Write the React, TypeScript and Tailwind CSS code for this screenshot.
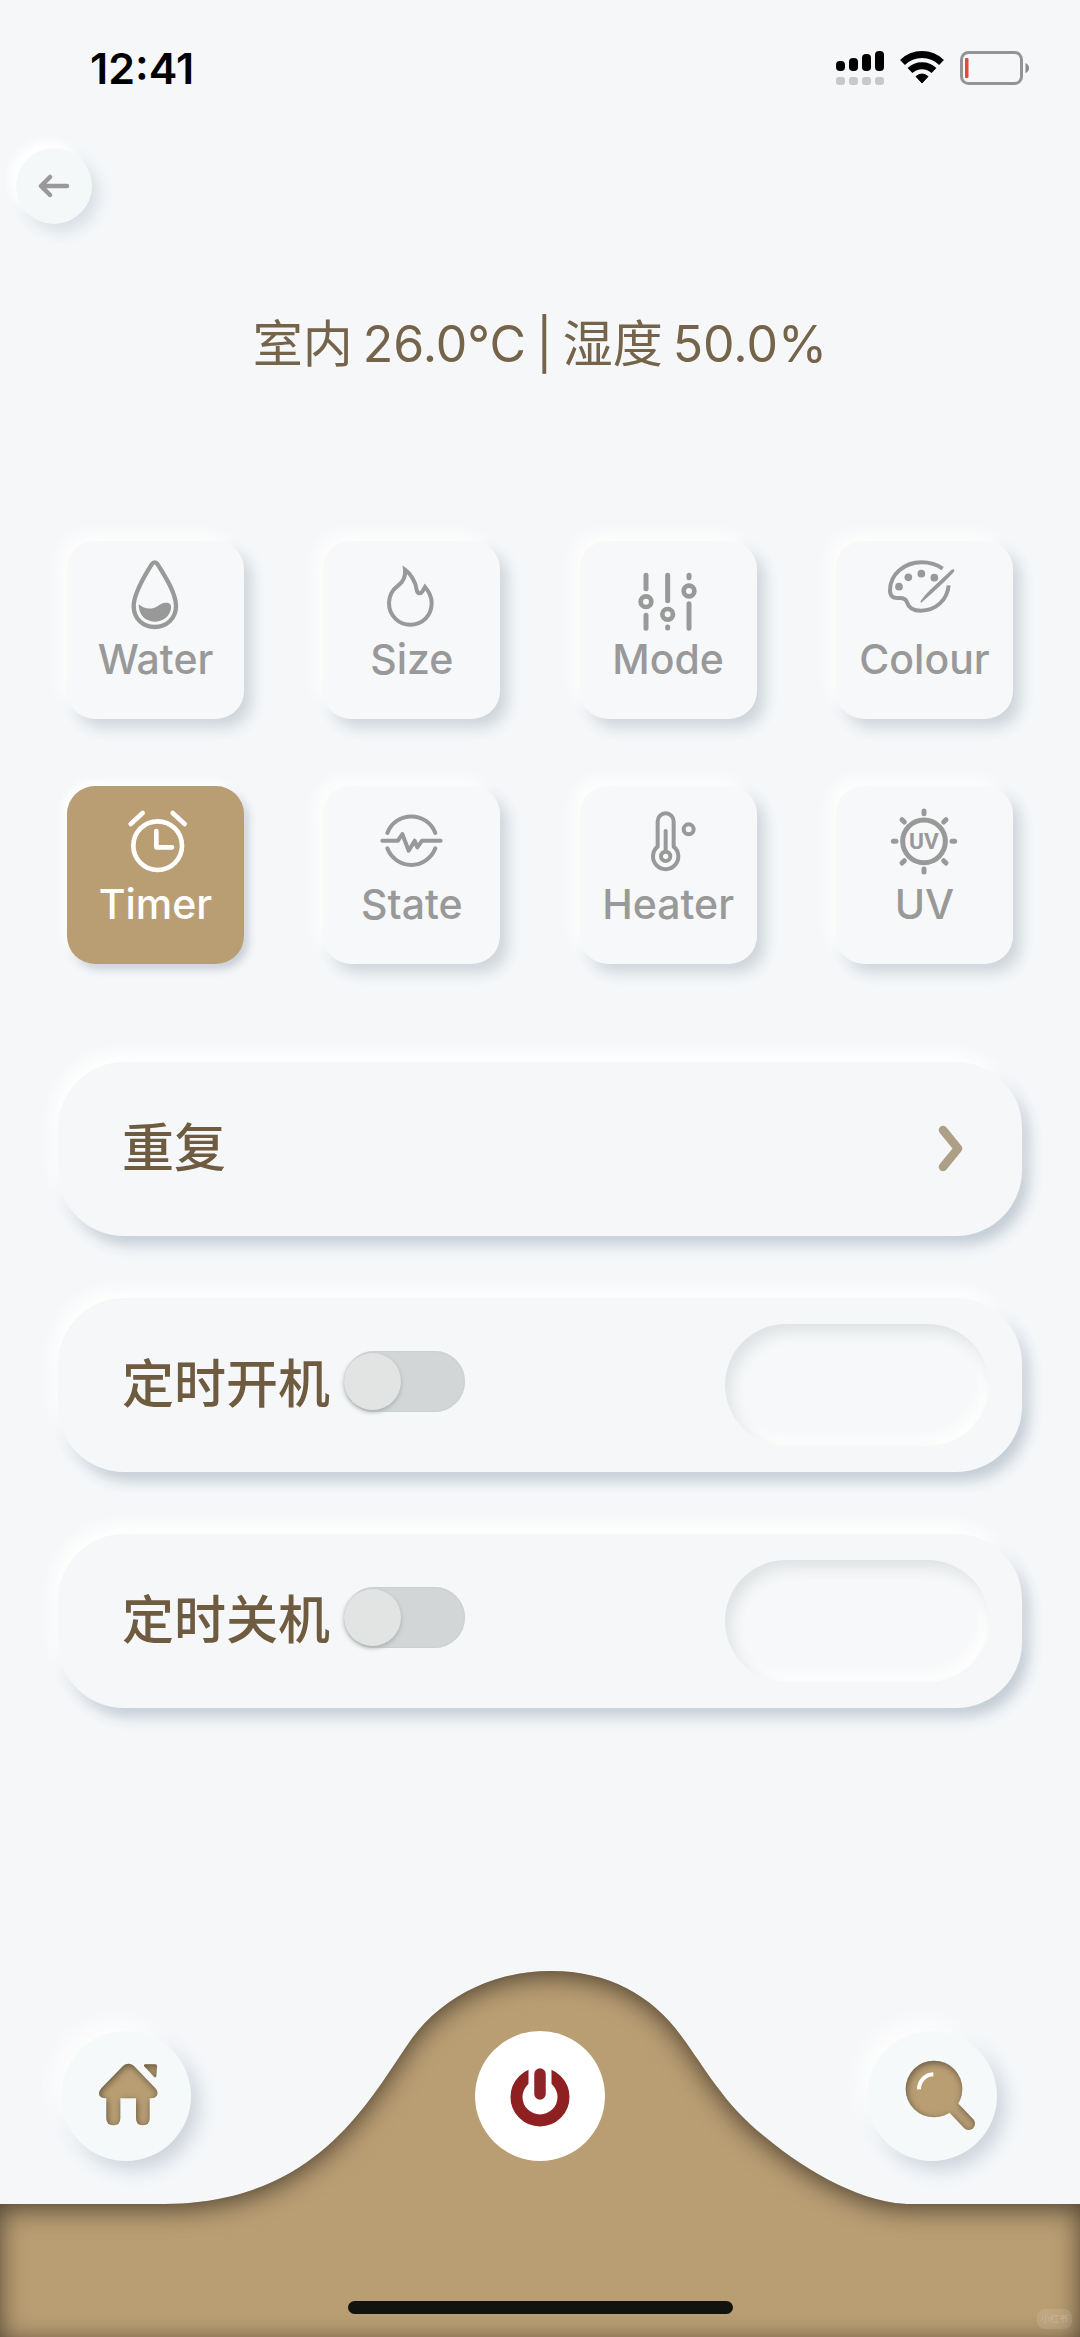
import { useState } from "react";
import type { ReactNode } from "react";

type Tile = {
	name: string;
	viewBox: string;
	icon: ReactNode;
};

const tiles: Tile[] = [
	{
		name: "Water",
		viewBox: "226 134 240 240",
		icon: (
			<>
				<path
					strokeWidth="13"
					d="M333 162C338 154 346 154 351 162C375 200 406 250 406 287C406 325 377 350 342 350C307 350 279 325 279 287C279 250 309 200 333 162Z"
				/>
				<path
					stroke="none"
					fill="currentColor"
					d="M294 282C310 296 330 298 346 290C358 284 362 277 376 277C388 276 393 284 391 296C386 320 366 334 342 334C314 334 294 314 294 282Z"
				/>
			</>
		),
	},
	{
		name: "Size",
		viewBox: "996 134 240 240",
		icon: (
			<path
				strokeWidth="12"
				strokeLinejoin="miter"
				d="M1095 178C1112 190 1127 215 1130 238C1132 252 1144 252 1149 240L1155 230C1168 245 1175 262 1175 278C1175 316 1147 343 1111 343C1076 343 1047 316 1047 278C1047 254 1058 238 1074 226C1090 214 1097 196 1095 178Z"
			/>
		),
	},
	{
		name: "Mode",
		viewBox: "266 134 240 240",
		icon: (
			<>
				<path
					strokeWidth="15"
					d="M320 195V235M320 315V354M385 195V271M385 350V353M449 195V202M449 280V354"
				/>
				<g strokeWidth="14">
					<circle cx="320" cy="274" r="16" />
					<circle cx="385" cy="312" r="16" />
					<circle cx="449" cy="242" r="16" />
				</g>
			</>
		),
	},
	{
		name: "Colour",
		viewBox: "1034 134 240 240",
		icon: (
			<>
				<path
					strokeWidth="12"
					strokeLinecap="butt"
					d="M1210 175C1190 161 1168 156 1147 156C1095 156 1052 192 1052 240C1052 256 1060 264 1076 263C1090 262 1100 264 1103 276C1108 292 1122 301 1144 301C1190 301 1224 268 1228 225"
				/>
				<g stroke="none" fill="currentColor">
					<circle cx="1079" cy="229" r="11.5" />
					<circle cx="1107" cy="201" r="11.5" />
					<circle cx="1146" cy="190" r="11.5" />
					<circle cx="1185" cy="202" r="11.5" />
					<path d="M1236 179Q1242 174 1245 179Q1246 182 1243 186Q1210 222 1146 277Q1142 277 1144 272Q1156 254 1172 239Z" />
				</g>
			</>
		),
	},
	{
		name: "Timer",
		viewBox: "226 118 240 240",
		icon: (
			<g strokeWidth="14">
				<circle cx="351" cy="255" r="73" />
				<path d="M347 211V260H394M270 190L306 157M396 157L432 190" />
			</g>
		),
	},
	{
		name: "State",
		viewBox: "996 118 240 240",
		icon: (
			<g strokeWidth="12">
				<path d="M1042 217A77 77 0 0 1 1186 217M1042 263A77 77 0 0 0 1186 263" />
				<path d="M1027 240H1074L1087 220L1106 270L1124 240L1132 260L1146 240H1202" />
			</g>
		),
	},
	{
		name: "Heater",
		viewBox: "266 118 240 240",
		icon: (
			<g strokeWidth="12">
				<path d="M355 258V182A24 24 0 0 1 403 182V258A38 38 0 1 1 355 258Z" />
				<circle cx="379" cy="287" r="14" />
				<path d="M379 211V272" />
				<circle cx="448" cy="206" r="15" />
			</g>
		),
	},
	{
		name: "UV",
		viewBox: "1034 118 240 240",
		icon: (
			<g strokeWidth="15">
				<circle cx="1154" cy="242" r="64" />
				<path d="M1154 151V159M1154 325V334M1062 242H1070M1238 242H1246M1088 177L1095 184M1220 177L1213 184M1095 300L1088 307M1213 300L1220 307" />
				<text
					x="1154"
					y="266"
					textAnchor="middle"
					stroke="none"
					fill="currentColor"
					fontFamily="Roboto, sans-serif"
					fontSize="68"
					fontWeight="700"
				>
					UV
				</text>
			</g>
		),
	},
];

function StatusBar() {
	return (
		<div className="flex items-center justify-between py-11 pl-[90px] pr-[50px] text-black">
			<span className="text-[43px] leading-12 font-semibold">12:41</span>
			<div className="flex items-center gap-4">
				<svg className="h-9 w-12" viewBox="0 0 48 36" aria-hidden="true">
					<rect x="0" y="11" width="9" height="10" rx="4" />
					<rect x="13" y="8" width="9" height="13" rx="4" />
					<rect x="26" y="4" width="9" height="17" rx="4" />
					<rect x="39" y="1" width="9" height="20" rx="4" />
					<g fill="#c8c8c8">
						<rect x="0" y="27" width="9" height="8" rx="3" />
						<rect x="13" y="27" width="9" height="8" rx="3" />
						<rect x="26" y="27" width="9" height="8" rx="3" />
						<rect x="39" y="27" width="9" height="8" rx="3" />
					</g>
				</svg>
				<svg className="h-9 w-11" viewBox="0 0 44 36" fill="none" aria-hidden="true">
					<path d="M2.5 12.5A28 28 0 0 1 41.5 12.5" stroke="#000" strokeWidth="7" />
					<path d="M10 20.5A17.5 17.5 0 0 1 34 20.5" stroke="#000" strokeWidth="7" />
					<path d="M16 26.5Q22 21.500 28 26.500L22 33Z" fill="#000" stroke="#000" strokeLinejoin="round" />
				</svg>
				<svg className="h-9 w-[70px]" viewBox="0 0 70 36" fill="none" aria-hidden="true">
					<rect x="1.500" y="2.500" width="60" height="31" rx="7" stroke="#949494" strokeWidth="3" />
					<rect x="5" y="8" width="3.500" height="20" rx="1" fill="#e5483f" />
					<path d="M65.500 13V23Q69 21.500 69 18T65.500 13Z" fill="#8a8a8a" />
				</svg>
			</div>
		</div>
	);
}

type TimerRowProps = {
	id: string;
	label: string;
};

function TimerRow({ id, label }: TimerRowProps) {
	const [on, setOn] = useState(false);

	return (
		<div className="flex items-center justify-between rounded-[66px] bg-[#f5f7f9] py-[26px] pl-16 pr-[33px] shadow-[-6px_-10px_14px_#fefefd,7px_9px_14px_#c3ccd5]">
			<div className="flex items-center gap-3.5">
				<label htmlFor={id} className="text-[52px] leading-16 font-medium text-[#6e5b40]">
					{label}
				</label>
				<input
					id={id}
					type="checkbox"
					role="switch"
					checked={on}
					onChange={(e) => setOn(e.target.checked)}
					className="mb-2 flex h-[61px] w-[121px] appearance-none items-center rounded-full bg-[#d2d6d7] shadow-[inset_0_0_2px_#bfc3c4] transition-colors before:size-[57px] before:rounded-full before:bg-[#e2e3e3] before:shadow-[0_2px_4px_#a9adae] before:transition-transform checked:bg-[#b99e73] checked:before:translate-x-16"
				/>
			</div>
			<input
				type="text"
				aria-label={`${label} 时间`}
				className="h-[122px] w-[264px] rounded-full bg-[#f6f8f9] px-10 text-center text-4xl text-[#6e5b40] shadow-[inset_6px_8px_14px_#dfe2e4,inset_-6px_-8px_12px_#fefefd]"
			/>
		</div>
	);
}

export default function App() {
	const [active, setActive] = useState("Timer");

	return (
		<div className="flex min-h-screen flex-col bg-[#f5f7f9] font-['Inter','Noto_Sans_CJK_SC',sans-serif]">
			<StatusBar />

			<button
				aria-label="Back"
				className="mt-3 ml-4 flex size-19 items-center justify-center rounded-full bg-[#f5f8f9] text-[#999] shadow-[-7px_-7px_10px_#fff,7px_8px_14px_#d9e0e5]"
			>
				<svg className="h-6 w-8" viewBox="0 0 32 24" fill="none" stroke="currentColor" strokeWidth="4.500" strokeLinecap="round" strokeLinejoin="round">
					<path d="M29 12H3M12 3L3 12L12 21" />
				</svg>
			</button>

			<h1 className="mt-22 flex justify-center gap-2.5 text-[50px] leading-16 text-[#75634a]">
				<span>室内</span>
				<span>26.0°C</span>
				<span>|</span>
				<span>湿度</span>
				<span>50.0%</span>
			</h1>

			<div className="mt-[165px] grid grid-cols-[repeat(4,177px)] justify-between gap-y-[67px] px-[67px]">
				{tiles.map((tile) => {
					const isActive = tile.name === active;
					return (
						<button
							key={tile.name}
							onClick={() => setActive(tile.name)}
							className={`flex flex-col items-center gap-1 rounded-[28px] pt-3.5 pb-10 ${
								isActive
									? "bg-[#b99e73] text-white shadow-[-4px_-4px_8px_#fff,4px_5px_8px_#c4ccd4]"
									: "bg-[#f6f8f9] text-[#999] shadow-[-9px_-9px_12px_#fcfcfb,8px_9px_14px_#ced6db]"
							}`}
						>
							<svg
								className="size-20"
								viewBox={tile.viewBox}
								fill="none"
								stroke="currentColor"
								strokeLinecap="round"
								strokeLinejoin="round"
								aria-hidden="true"
							>
								{tile.icon}
							</svg>
							<span className="text-[41px] leading-10 font-medium">{tile.name}</span>
						</button>
					);
				})}
			</div>

			<div className="mt-[98px] flex flex-col gap-[62px] px-[58px]">
				<button className="flex items-center justify-between rounded-[66px] bg-[#f5f7f9] py-[55px] pl-16 pr-[54px] text-[#6e5b40] shadow-[-6px_-10px_14px_#fefefd,7px_9px_14px_#c3ccd5]">
					<span className="text-[52px] leading-16 font-medium">重复</span>
					<svg className="h-12 w-8" viewBox="0 0 32 48" fill="none" stroke="#ae9f87" strokeWidth="8.500" strokeLinecap="round" strokeLinejoin="round" aria-hidden="true">
						<path d="M7 5L22 23.500L7 42" />
					</svg>
				</button>
				<TimerRow id="power-on" label="定时开机" />
				<TimerRow id="power-off" label="定时关机" />
			</div>

			<footer className="relative mt-auto">
				<svg
					className="absolute inset-0 h-full w-full"
					viewBox="0 0 1080 366"
					preserveAspectRatio="none"
					aria-hidden="true"
				>
					<defs>
						{/* darkens a shape along its inside edge */}
						<filter id="inset-wave" x="-0.1" y="-0.2" width="1.2" height="1.4" colorInterpolationFilters="sRGB">
							<feFlood floodColor="#4a3d2e" floodOpacity="0.95" />
							<feComposite in2="SourceAlpha" operator="out" />
							<feGaussianBlur stdDeviation="13" />
							<feOffset dy="5" />
							<feComposite in2="SourceAlpha" operator="in" result="shade" />
							<feMerge>
								<feMergeNode in="SourceGraphic" />
								<feMergeNode in="shade" />
							</feMerge>
						</filter>
						<filter id="inset-icon" x="-0.3" y="-0.3" width="1.6" height="1.6" colorInterpolationFilters="sRGB">
							<feFlood floodColor="#4f4436" floodOpacity="0.8" />
							<feComposite in2="SourceAlpha" operator="out" />
							<feGaussianBlur stdDeviation="11" />
							<feOffset dx="3" dy="5" />
							<feComposite in2="SourceAlpha" operator="in" result="shade" />
							<feMerge>
								<feMergeNode in="SourceGraphic" />
								<feMergeNode in="shade" />
							</feMerge>
						</filter>
					</defs>
					<path
						fill="#b99e73"
						filter="url(#inset-wave)"
						d="M0 233H165C230 232 285 215 334 169C365 140 385 107 406 76C436 29 490 0 551 0C608 0 652 24 682 66C706 99 720 125 751 154C790 189 845 225 895 232C903 233 910 233 916 233H1080V366H0Z"
					/>
				</svg>

				<nav className="relative grid grid-cols-3 pt-15">
					<button
						aria-label="Home"
						className="ml-[61px] size-[130px] justify-self-start rounded-full bg-[#f6f9fa] shadow-[-10px_-12px_16px_#fcfcfc,8px_9px_18px_#ccd4dc]"
					>
						<svg viewBox="62 65 390 390">
							<g fill="#b99e73" filter="url(#inset-icon)">
								<path d="M248 170Q264 157 281 170L345 237Q356 250 348 261Q344 267 334 267H328V327Q328 348 308 348Q287 348 287 327V267H240V327Q240 348 219 348Q198 348 198 327V267H194Q184 267 179 261Q172 250 183 237Z" />
								<path d="M312 171Q309 165 316 165H344Q350 165 350 171L348 200Q346 206 341 202Z" />
							</g>
						</svg>
					</button>
					<button aria-label="Power" className="size-[130px] justify-self-center rounded-full bg-white">
						<svg viewBox="0 0 130 130" fill="none">
							<circle cx="65" cy="66" r="23.500" stroke="#8e2022" strokeWidth="12" />
							<path d="M53.500 30H76.500V56H53.500Z" fill="#fff" />
							<path d="M65 43V63" stroke="#8e2428" strokeWidth="11.500" strokeLinecap="round" />
						</svg>
					</button>
					<button
						aria-label="Search"
						className="mr-[83px] size-[130px] justify-self-end rounded-full bg-[#f6f9fa] shadow-[-10px_-12px_16px_#fcfcfc,8px_9px_18px_#ccd4dc]"
					>
						<svg viewBox="80 65 390 390" fill="none">
							<g filter="url(#inset-icon)">
								<circle cx="281" cy="239" r="85" fill="#b99e73" />
								<path d="M325 280L385 343" stroke="#b99e73" strokeWidth="38" strokeLinecap="round" />
							</g>
							<path d="M236 240A44 44 0 0 1 279 195" stroke="#fff" strokeWidth="12" />
						</svg>
					</button>
				</nav>

				<div className="relative mx-auto mt-35 h-[13px] w-[385px] rounded-full bg-[#10130e]" />
				<div className="relative h-[23px]">
					<span className="absolute right-2 bottom-2 rounded-lg bg-white/10 px-1 text-[9px] leading-5 text-white/20">
						小红书
					</span>
				</div>
			</footer>
		</div>
	);
}
